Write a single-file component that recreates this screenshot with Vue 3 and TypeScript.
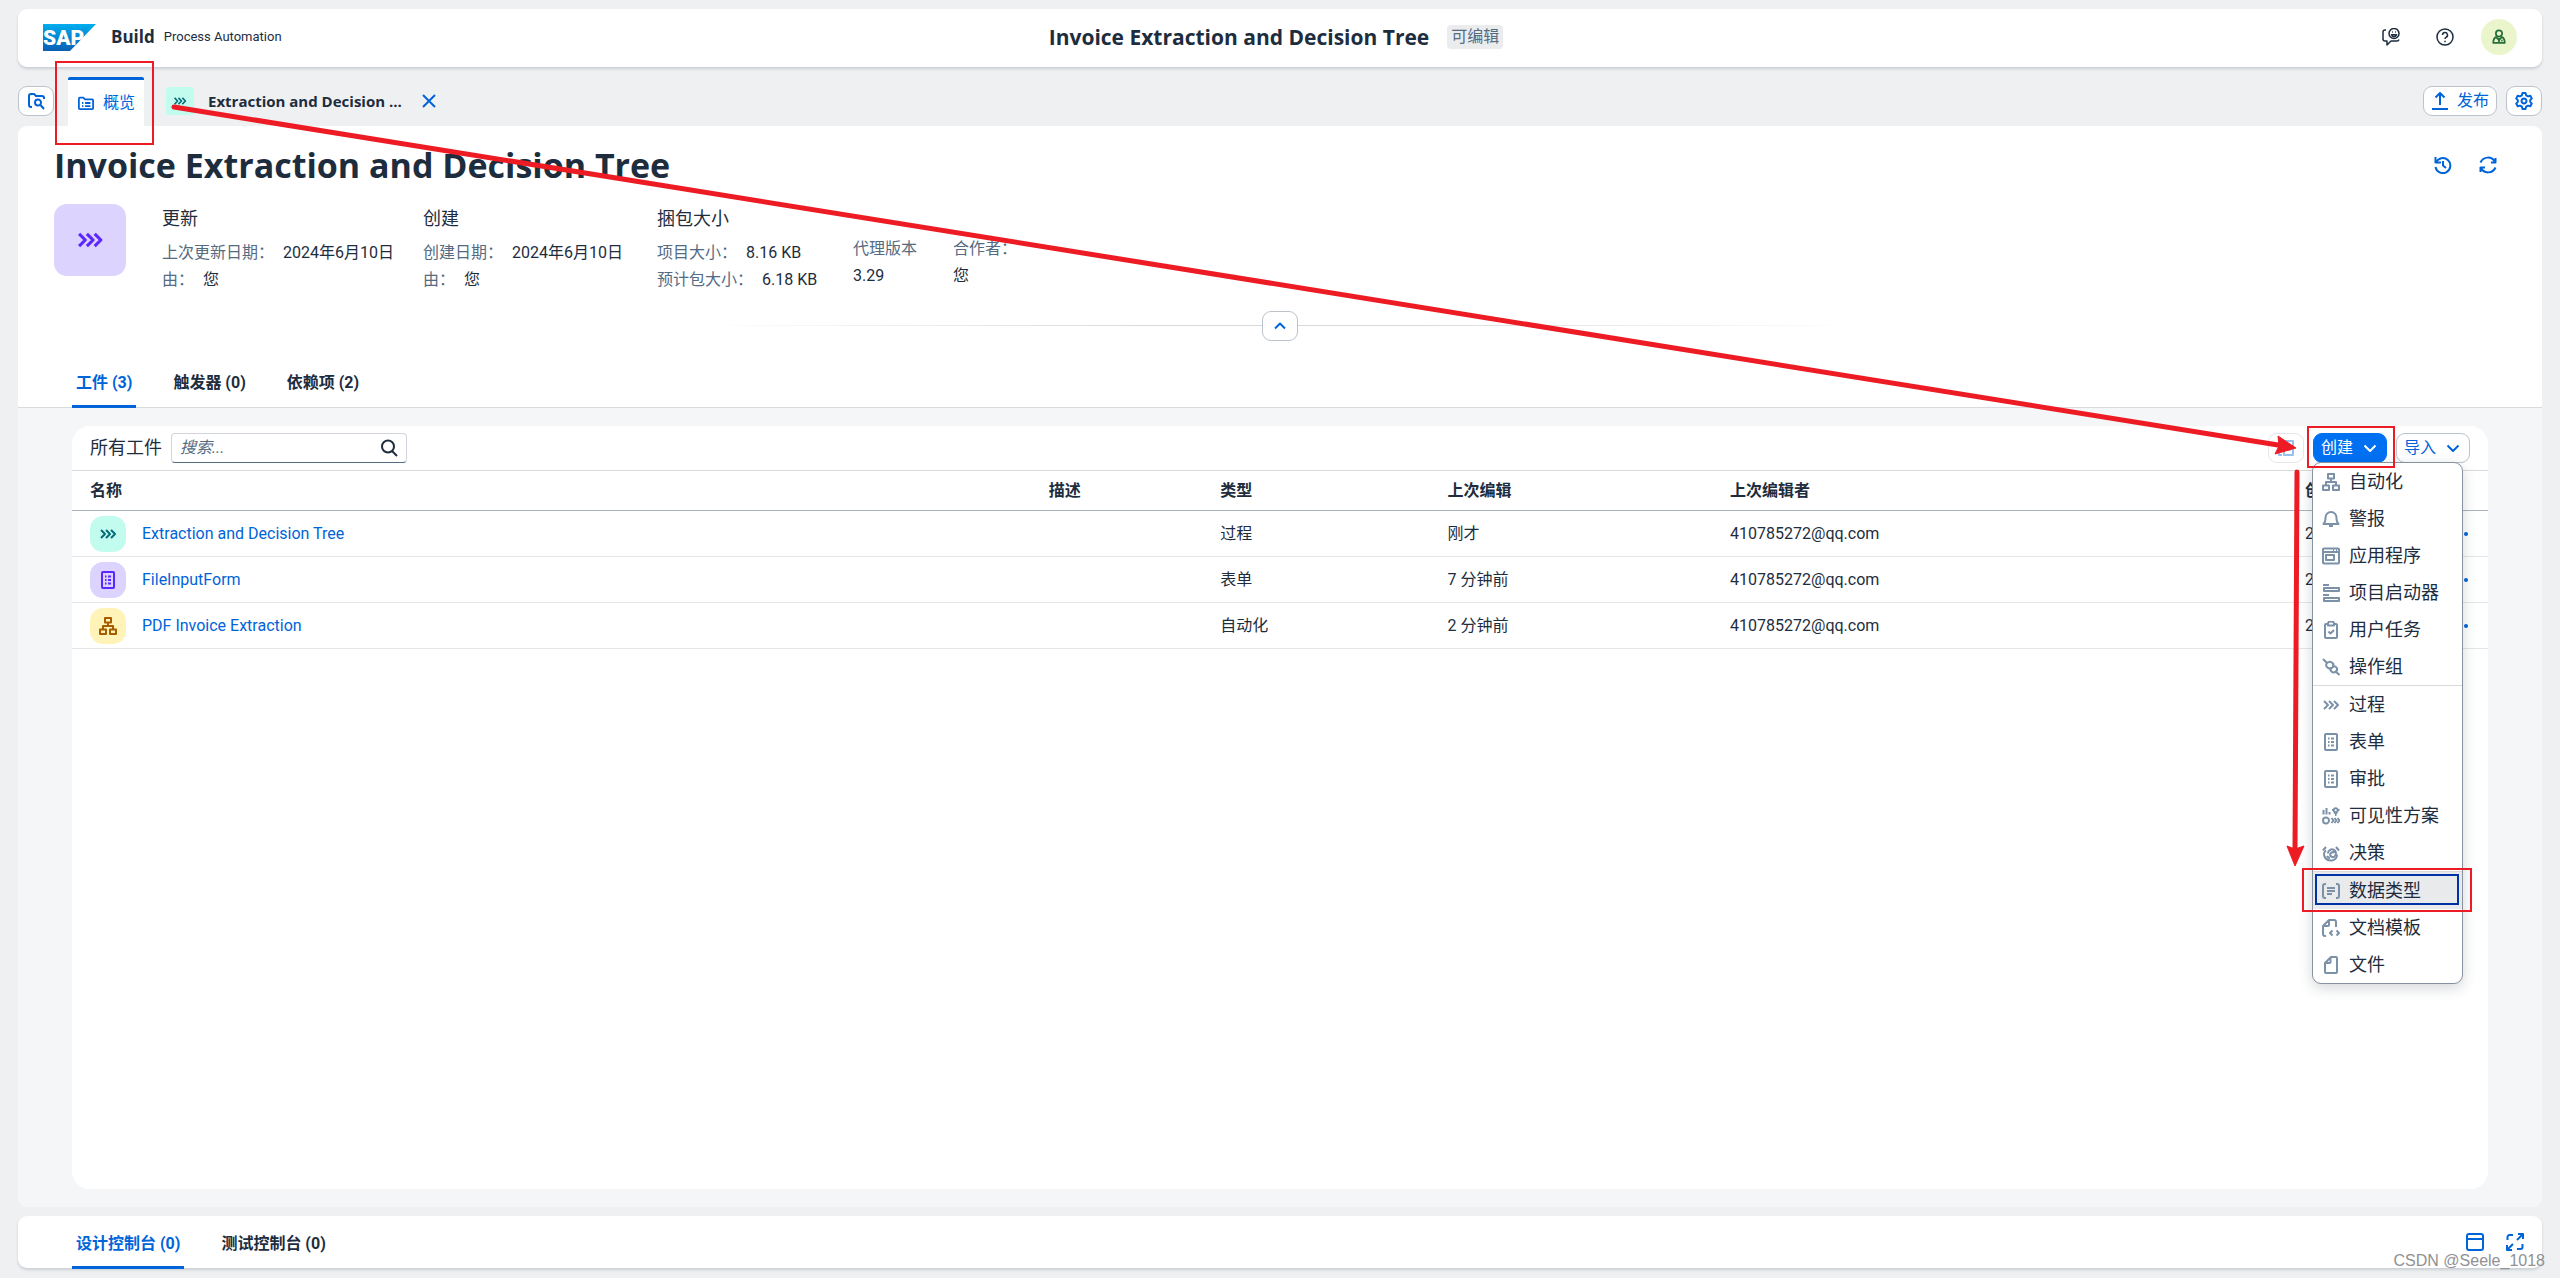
<script setup lang="ts">
import { h, ref, type FunctionalComponent } from 'vue'

const shapes: Record<string, string[]> = {
  folderSearch: ['M5 15H4a2 2 0 0 1-2-2V4a2 2 0 0 1 2-2h3l2 2h6a2 2 0 0 1 2 2v1', 'M14 10.500a3 3 0 1 1-6 0a3 3 0 1 1 6 0', 'M13.500 13l3.500 4'],
  overview: ['M1 15V4a1 1 0 0 1 1-1h4l2 2h8a1 1 0 0 1 1 1v9a1 1 0 0 1-1 1H2a1 1 0 0 1-1-1z', 'M4.500 9h1.500M8 9h6M4.500 12.500h1.500M8 12.500h6'],
  process: ['M2 5l4 4l-4 4', 'M7 5l4 4l-4 4', 'M12 5l4 4l-4 4'],
  close: ['M3 3l12 12M15 3L3 15'],
  chat: ['M4 2H3a2 2 0 0 0-2 2v7a2 2 0 0 0 2 2h2v4l4-4h6a2 2 0 0 0 2-1.500', 'M17 5.500a5 5 0 1 1-10 0a5 5 0 1 1 10 0', 'M9.500 6.800a2.600 2.600 0 0 0 5 0z', 'M10.200 4h.8M13 4h.8'],
  help: ['M17 9a8 8 0 1 1-16 0a8 8 0 1 1 16 0', 'M6.500 7a2.500 2.500 0 1 1 3.500 2.300q-1 .5-1 1.700', 'M9 12.700v1.500'],
  person: ['M12.500 5a3.500 3.500 0 1 1-7 0a3.500 3.500 0 1 1 7 0', 'M6.500 8.500Q2.500 10 2.500 15.500h13q0-5.500-4-7', 'M6 9.500l3 3l3-3', 'M9 10v5M11.500 13h1.500'],
  publish: ['M9 13V1M4.500 5.500L9 1l4.500 4.500', 'M1 17h16'],
  gear: ['M7.500 1h3l.6 2.300l2 1.100l2.200-.6l1.500 2.600l-1.600 1.700v1.800l1.600 1.700l-1.500 2.600l-2.200-.6l-2 1.100l-.6 2.300h-3l-.6-2.300l-2-1.100l-2.200.6l-1.500-2.600l1.600-1.700V8.100L1.200 6.400l1.500-2.600l2.200.6l2-1.100z', 'M11.500 9a2.500 2.500 0 1 1-5 0a2.500 2.500 0 1 1 5 0'],
  history: ['M1.500 1v5.500h5.500', 'M2 6.500A7.500 7.500 0 1 1 1.500 11', 'M9 5v4.500l3 2.500'],
  refresh: ['M1.500 6.500A8 8 0 0 1 16 6M16.500 2v4.500h-4.500', 'M16.500 11.500A8 8 0 0 1 2 12M1.500 16v-4.500h4.500'],
  up: ['M4 11.500l5-5l5 5'],
  down: ['M3.500 6.500l5.500 5.500l5.500-5.500'],
  search: ['M14 7.500a6 6 0 1 1-12 0a6 6 0 1 1 12 0', 'M12 12l5 5'],
  form: ['M4 1h10a1 1 0 0 1 1 1v14a1 1 0 0 1-1 1H4a1 1 0 0 1-1-1V2a1 1 0 0 1 1-1z', 'M6 5.500h1.500M9 5.500h3M6 9h1.500M9 9h3M6 12.500h1.500M9 12.500h3'],
  tree: ['M6 1h6v4.500H6z', 'M1 12.500h6V17H1z', 'M11 12.500h6V17h-6z', 'M9 5.500V9M4 12.500V9h10v3.500'],
  bell: ['M1.500 14q2-2 2-5V7.500a5.500 5.500 0 0 1 11 0V9q0 3 2 5z', 'M7 16h4'],
  app: ['M2 1.500h14a1 1 0 0 1 1 1v13a1 1 0 0 1-1 1H2a1 1 0 0 1-1-1v-13a1 1 0 0 1 1-1z', 'M1 5h16M11 3.200h1M14 3.200h1', 'M4 8h8v5H4z'],
  launcher: ['M1 1h6M2 4h15v3H2zM1 11h6M2 14h15v3H2z'],
  task: ['M5 3H4a1 1 0 0 0-1 1v12a1 1 0 0 0 1 1h10a1 1 0 0 0 1-1V4a1 1 0 0 0-1-1h-1', 'M6 2.500q0-2 3-2t3 2V4.500H6z', 'M6.500 10.500l2 2l3.500-3.500'],
  link: ['M1 1l4 4M13 13l4.500 4', 'M5 5q3-2.500 5.500 0q2 2 0 4.500q-3 2-5 0q-2.500-2-.5-4.500z', 'M10 8.500q3-1 4.500 1q1.500 2-.5 4q-2.500 2-4.500 0q-2-2-.500-4'],
  scenario: ['M1.500 7.500V3M4.500 7.500V1M7.500 7.500V5', 'M7 13.500a3 3 0 1 1-6 0a3 3 0 1 1 6 0', 'M9.500 11l2 2.500l-2 2.500M12.500 11l2 2.500l-2 2.500M15.500 11l2 2.500l-2 2.500', 'M12.800 6V5a2 2 0 1 1 1.800 0v1zM13 8h1.500M10 3h1M16.500 3h1'],
  decision: ['M1 6.500L4 3M17 6.500L14 3', 'M4 6.500q-3 2-1.500 6q2 4.500 7.500 4q5-1 5-6', 'M6 9.500a4 4 0 1 1 6.500 3q-2 1.500-4-.5q-1-2 1-3.500q2-1 3 .5', 'M5 12q1 2 3 2'],
  datatype: ['M4 2H3a2 2 0 0 0-2 2v10a2 2 0 0 0 2 2h1M14 2h1a2 2 0 0 1 2 2v10a2 2 0 0 1-2 2h-1', 'M5 6h8M5 9h8M5 12h5'],
  docTemplate: ['M4 17H3a2 2 0 0 1-2-2V7l6-6h5a2 2 0 0 1 2 2v5', 'M7 1v5a1 1 0 0 1-1 1H1', 'M10.500 11.500l-2.500 2.500l2.500 2.500M14.500 11.500L17 14l-2.500 2.500'],
  file: ['M3 7l6-6h5a1 1 0 0 1 1 1v14a1 1 0 0 1-1 1H4a1 1 0 0 1-1-1z', 'M8.500 1.500V6a1 1 0 0 1-1 1H3'],
  copy: ['M6 4H3a1 1 0 0 0-1 1v11h3', 'M7 2h9v14H7z', 'M10 6h3v5h-3z'],
  window: ['M3 1h12a2 2 0 0 1 2 2v12a2 2 0 0 1-2 2H3a2 2 0 0 1-2-2V3a2 2 0 0 1 2-2z', 'M1 6h16'],
  expand: ['M1.500 7V4a2 2 0 0 1 2-2H7M16.500 11v3a2 2 0 0 1-2 2H11', 'M11 7l6-6M12 1h5v5', 'M7 11l-6 6M1 12v5h5'],
}

const Glyph: FunctionalComponent<{ name: string }> = (props) =>
  h(
    'svg',
    { class: 'glyph', viewBox: '0 0 18 18', 'aria-hidden': 'true' },
    shapes[props.name].map((d) => h('path', { d })),
  )
Glyph.props = ['name']

const facts = [
  { title: '更新', rows: [['上次更新日期：', '2024年6月10日'], ['由：', '您']] },
  { title: '创建', rows: [['创建日期：', '2024年6月10日'], ['由：', '您']] },
  { title: '捆包大小', rows: [['项目大小：', '8.16 KB'], ['预计包大小：', '6.18 KB']] },
]

const sections = ['工件 (3)', '触发器 (0)', '依赖项 (2)']
const consoles = ['设计控制台 (0)', '测试控制台 (0)']
const headings = ['名称', '描述', '类型', '上次编辑', '上次编辑者', '创建日期', '']

const artifacts = [
  { icon: 'process', tone: 'teal', name: 'Extraction and Decision Tree', type: '过程', edited: '刚才' },
  { icon: 'form', tone: 'violet', name: 'FileInputForm', type: '表单', edited: '7 分钟前' },
  { icon: 'tree', tone: 'amber', name: 'PDF Invoice Extraction', type: '自动化', edited: '2 分钟前' },
]

const menuGroups = [
  [
    { icon: 'tree', label: '自动化' },
    { icon: 'bell', label: '警报' },
    { icon: 'app', label: '应用程序' },
    { icon: 'launcher', label: '项目启动器' },
    { icon: 'task', label: '用户任务' },
    { icon: 'link', label: '操作组' },
  ],
  [
    { icon: 'process', label: '过程' },
    { icon: 'form', label: '表单' },
    { icon: 'form', label: '审批' },
    { icon: 'scenario', label: '可见性方案' },
    { icon: 'decision', label: '决策' },
  ],
  [
    { icon: 'datatype', label: '数据类型' },
    { icon: 'docTemplate', label: '文档模板' },
    { icon: 'file', label: '文件' },
  ],
]
const current = ref('数据类型')
const query = ref('')
</script>

<template>
  <div class="app">
    <header class="shell">
      <div class="brand">
        <svg class="logo" viewBox="0 0 53 27" role="img" aria-label="SAP">
          <defs>
            <linearGradient id="logo-fill" x1="0" y1="0" x2="0" y2="1">
              <stop offset="0" stop-color="#00aeef" />
              <stop offset="1" stop-color="#0a5fb4" />
            </linearGradient>
          </defs>
          <polygon points="0,0 53,0 27,27 0,27" fill="url(#logo-fill)" />
          <text x="0" y="21">SAP</text>
        </svg>
        <strong>Build</strong>
        <span>Process Automation</span>
      </div>
      <div class="project">
        <span class="project-name">Invoice Extraction and Decision Tree</span>
        <span class="badge">可编辑</span>
      </div>
      <div class="shell-actions">
        <button class="plain dark" aria-label="反馈"><Glyph name="chat" /></button>
        <button class="plain dark" aria-label="帮助"><Glyph name="help" /></button>
        <button class="avatar" aria-label="用户"><Glyph name="person" /></button>
      </div>
    </header>

    <nav class="tabs">
      <button class="btn square" aria-label="浏览"><Glyph name="folderSearch" /></button>
      <a class="tab open" href="#overview">
        <Glyph name="overview" /><span>概览</span>
        <i class="mark mark-tab"></i>
      </a>
      <a class="tab" href="#process">
        <span class="chip"><Glyph name="process" /></span>
        <b>Extraction and Decision ...</b>
      </a>
      <button class="plain close" aria-label="关闭"><Glyph name="close" /></button>
      <div class="tabs-end">
        <button class="btn wide"><Glyph name="publish" />发布</button>
        <button class="btn square" aria-label="设置"><Glyph name="gear" /></button>
      </div>
    </nav>

    <main>
      <section class="summary">
        <div class="title-row">
          <h1>Invoice Extraction and Decision Tree</h1>
          <div class="title-actions">
            <button class="plain" aria-label="历史"><Glyph name="history" /></button>
            <button class="plain" aria-label="刷新"><Glyph name="refresh" /></button>
          </div>
        </div>
        <div class="facts">
          <div class="project-icon"><Glyph name="process" /></div>
          <dl v-for="f in facts" :key="f.title" class="fact">
            <h2>{{ f.title }}</h2>
            <div v-for="r in f.rows" :key="r[0]"><dt>{{ r[0] }}</dt><dd>{{ r[1] }}</dd></div>
          </dl>
          <dl class="stacked"><dt>代理版本</dt><dd>3.29</dd></dl>
          <dl class="stacked"><dt>合作者：</dt><dd>您</dd></dl>
        </div>
        <div class="fold">
          <button class="btn square" aria-label="折叠标题"><Glyph name="up" /></button>
        </div>
        <nav class="sections">
          <a v-for="(s, i) in sections" :key="s" href="#" :class="{ active: i === 0 }">{{ s }}</a>
        </nav>
      </section>

      <section class="body">
        <div class="card">
          <div class="toolbar">
            <label for="artifact-search">所有工件</label>
            <div class="search">
              <input id="artifact-search" v-model="query" type="text" placeholder="搜索..." />
              <Glyph name="search" />
            </div>
            <div class="toolbar-end">
              <button class="btn square" disabled aria-label="复制"><Glyph name="copy" /></button>
              <div class="create">
                <button class="btn wide primary" aria-haspopup="menu">创建<Glyph name="down" /></button>
                <i class="mark mark-create"></i>
                <div class="menu" role="menu">
                  <div v-for="(g, i) in menuGroups" :key="i" class="group">
                    <button
                      v-for="m in g"
                      :key="m.label"
                      role="menuitem"
                      :class="{ current: m.label === current }"
                      @click="current = m.label"
                    >
                      <Glyph :name="m.icon" />{{ m.label }}
                      <i v-if="m.label === current" class="mark mark-item"></i>
                    </button>
                  </div>
                </div>
              </div>
              <button class="btn wide">导入<Glyph name="down" /></button>
            </div>
          </div>
          <table>
            <colgroup>
              <col class="c-name" /><col class="c-desc" /><col class="c-type" /><col class="c-edit" />
              <col class="c-by" /><col class="c-date" /><col />
            </colgroup>
            <thead>
              <tr><th v-for="(t, i) in headings" :key="i" scope="col">{{ t }}</th></tr>
            </thead>
            <tbody>
              <tr v-for="a in artifacts" :key="a.name">
                <td>
                  <div class="name">
                    <span class="tile" :class="a.tone"><Glyph :name="a.icon" /></span>
                    <a href="#">{{ a.name }}</a>
                  </div>
                </td>
                <td></td>
                <td>{{ a.type }}</td>
                <td>{{ a.edited }}</td>
                <td>410785272@qq.com</td>
                <td>2024年6月10日</td>
                <td class="more-cell">
                  <button class="more" aria-label="更多"><i></i><i></i><i></i></button>
                </td>
              </tr>
            </tbody>
          </table>
        </div>
      </section>
    </main>

    <footer class="console">
      <nav class="sections">
        <a v-for="(c, i) in consoles" :key="c" href="#" :class="{ active: i === 0 }">{{ c }}</a>
      </nav>
      <div class="console-actions">
        <button class="plain" aria-label="窗口"><Glyph name="window" /></button>
        <button class="plain" aria-label="全屏"><Glyph name="expand" /></button>
      </div>
    </footer>

    <svg class="arrows" viewBox="0 0 2560 1278" preserveAspectRatio="none" aria-hidden="true">
      <path class="shaft" d="M174 107L2278 445" />
      <path class="head" d="M2278 436L2296 448L2275 454L2279 446z" />
      <path class="shaft" d="M2297 472L2295 850" />
      <path class="head" d="M2287 846L2295 849L2304 846L2295 866z" />
    </svg>
    <div class="watermark">CSDN @Seele_1018</div>
  </div>
</template>

<style>
body {
  margin: 0;
}
</style>

<style scoped>
.app {
  --text: #1d2d3e;
  --label: #556b82;
  --blue: #0064d9;
  --red: #ed1c24;
  --strong: 'Open Sans', 'Noto Sans CJK SC', sans-serif;
  position: relative;
  display: flex;
  flex-direction: column;
  box-sizing: border-box;
  min-height: 100vh;
  padding: 9px 18px 10px;
  background: #eff0f2;
  color: var(--text);
  font: 16px/24px Roboto, 'Noto Sans CJK SC', sans-serif;
}
.app *,
.app *::before {
  box-sizing: border-box;
}
button {
  padding: 0;
  border: 0;
  background: none;
  color: inherit;
  font: inherit;
  cursor: pointer;
}
a {
  color: inherit;
  text-decoration: none;
}
dl,
dd,
h1,
h2 {
  margin: 0;
}
.glyph {
  flex: none;
  width: 18px;
  height: 18px;
  fill: none;
  stroke: currentColor;
  stroke-width: 2;
  stroke-linejoin: round;
}
.shell {
  display: grid;
  grid-template-columns: 1fr auto 1fr;
  align-items: center;
  height: 58px;
  padding: 0 25px 2px;
  border-radius: 9px;
  background: #fff;
  box-shadow: 0 2px 3px #c9cfd5;
}
.brand {
  display: flex;
  align-items: center;
}
.logo {
  width: 53px;
  height: 27px;
  margin-right: 15px;
}
.logo text {
  fill: #fff;
  font: 900 21px Roboto, sans-serif;
}
.brand strong {
  margin-right: 9px;
  font: 700 17px/24px var(--strong);
}
.brand span {
  font-size: 13px;
}
.project {
  display: flex;
  align-items: center;
  gap: 18px;
  margin-right: 8px;
}
.project-name {
  font: 700 21px/30px var(--strong);
}
.badge {
  padding: 0 4px;
  border-radius: 4px;
  background: #ebecee;
  color: var(--label);
}
.shell-actions {
  display: flex;
  align-items: center;
  justify-content: flex-end;
  gap: 36px;
}
.plain {
  display: flex;
  color: var(--blue);
}
.dark {
  color: var(--text);
}
.dark .glyph {
  stroke-width: 1.5;
}
.avatar {
  display: flex;
  align-items: center;
  justify-content: center;
  width: 36px;
  height: 36px;
  margin-left: -9px;
  border-radius: 50%;
  background: #ebf5cb;
  color: #256f3a;
}
.avatar .glyph {
  width: 16px;
  height: 16px;
}
.tabs {
  display: flex;
  align-items: flex-end;
  height: 59px;
}
.btn {
  display: inline-flex;
  align-items: center;
  justify-content: center;
  height: 30px;
  border: 1px solid #bcc3ca;
  border-radius: 9px;
  background: #fff;
  color: var(--blue);
}
.square {
  width: 36px;
}
.wide {
  gap: 8px;
  width: 74px;
}
.tabs > .btn,
.tabs-end {
  margin-bottom: 10px;
}
.tabs-end {
  display: flex;
  gap: 9px;
  margin-left: auto;
}
.tab {
  display: flex;
  align-items: center;
  height: 49px;
  padding-bottom: 2px;
}
.tab b {
  font: 700 15px/24px var(--strong);
}
.tab.open {
  position: relative;
  gap: 9px;
  margin: 0 22px 0 14px;
  padding: 0 9px 0 10px;
  border-top: 3px solid var(--blue);
  border-radius: 2px 2px 0 0;
  background: #fff;
  color: var(--blue);
}
.tab.open .glyph {
  width: 16px;
  height: 16px;
}
.chip {
  display: flex;
  align-items: center;
  justify-content: center;
  width: 28px;
  height: 28px;
  margin-right: 14px;
  border-radius: 3px;
  background: #c2fcee;
  color: #046c7a;
}
.chip .glyph {
  width: 14px;
  height: 14px;
}
.close {
  margin: 0 0 16px 18px;
}
.mark {
  position: absolute;
  z-index: 3;
  border: 2px solid var(--red);
  pointer-events: none;
}
.mark-tab {
  inset: -19px -10px -19px -13px;
}
.mark-create {
  inset: -7px -8px -5px -6px;
}
.mark-item {
  inset: -4px -10px -3px -11px;
}
main {
  display: flex;
  flex: 1;
  flex-direction: column;
}
.summary {
  border-bottom: 1px solid #d9dcdf;
  border-radius: 9px 9px 0 0;
  background: #fff;
}
.title-row {
  display: flex;
  align-items: center;
  justify-content: space-between;
  height: 78px;
  padding: 0 45px 0 36px;
}
h1 {
  font: 700 34px/44px var(--strong);
}
.title-actions {
  display: flex;
  gap: 27px;
}
.facts {
  display: grid;
  grid-template-columns: 108px 261px 234px 196px 100px auto;
  height: 107px;
  padding-left: 36px;
}
.project-icon {
  display: flex;
  align-items: center;
  justify-content: center;
  width: 72px;
  height: 72px;
  border-radius: 13px;
  background: #dcd3ff;
  color: #5b27ff;
}
.project-icon .glyph {
  width: 28px;
  height: 28px;
}
.fact h2 {
  margin-bottom: 5px;
  font-size: 18px;
  font-weight: 400;
  line-height: 30px;
}
.fact div {
  display: flex;
  gap: 9px;
  line-height: 27px;
}
dt {
  color: var(--label);
}
.stacked {
  padding-top: 31px;
  line-height: 27px;
}
.fold {
  display: flex;
  justify-content: center;
  height: 30px;
  background: linear-gradient(90deg, transparent 27%, #d9d9d9 45%, #d9d9d9 55%, transparent 73%) 0 14px / 100% 1px no-repeat;
}
.sections {
  display: flex;
  gap: 33px;
  padding-left: 54px;
  font-weight: 700;
}
.sections a {
  padding: 0 4px;
  border-bottom: 3px solid transparent;
}
.sections .active {
  border-color: var(--blue);
  color: var(--blue);
}
.summary .sections {
  height: 67px;
  margin-bottom: -1px;
  line-height: 83px;
}
.body {
  display: flex;
  flex: 1;
  padding: 18px 54px;
  border-radius: 0 0 9px 9px;
  background: #f5f6f8;
}
.card {
  flex: 1;
  border-radius: 18px;
  background: #fff;
}
.toolbar {
  display: flex;
  align-items: center;
  height: 45px;
  padding: 0 18px;
  border-bottom: 1px solid #d9d9d9;
  font-size: 18px;
}
.search {
  display: flex;
  align-items: center;
  width: 236px;
  height: 30px;
  margin-left: 9px;
  padding: 0 8px;
  border: 1px solid #cfd5da;
  border-bottom-color: var(--label);
  border-radius: 4px;
}
.search input {
  flex: 1;
  min-width: 0;
  padding: 0;
  border: 0;
  outline: 0;
  background: none;
  color: inherit;
  font: inherit;
  font-size: 16px;
}
.search input::placeholder {
  color: var(--label);
  font-style: italic;
}
.toolbar-end {
  display: flex;
  gap: 9px;
  margin-left: auto;
  font-size: 16px;
}
.btn:disabled {
  opacity: 0.4;
}
.create {
  position: relative;
  display: flex;
}
.primary {
  border-color: #0070f2;
  background: #0070f2;
  color: #fff;
}
.menu {
  position: absolute;
  top: 29px;
  left: -1px;
  z-index: 2;
  width: 151px;
  border: 1px solid #8793a0;
  border-radius: 9px;
  background: #fff;
  box-shadow: 0 4px 14px #22354833;
  font-size: 18px;
}
.group + .group {
  border-top: 1px solid #d9d9d9;
}
.menu button {
  position: relative;
  display: flex;
  align-items: center;
  gap: 9px;
  width: 100%;
  height: 37px;
  padding-left: 9px;
  white-space: nowrap;
}
.menu .glyph {
  color: #7b91a8;
}
.menu .current {
  background: #e9eaec;
}
.menu .current::before {
  position: absolute;
  inset: 2px 3px 4px 2px;
  border: 2px solid #0032a5;
  content: '';
}
table {
  width: 100%;
  border-collapse: separate;
  border-spacing: 0;
  table-layout: fixed;
}
.c-name {
  width: 40.1%;
}
.c-desc {
  width: 7.1%;
}
.c-type {
  width: 9.4%;
}
.c-edit {
  width: 11.7%;
}
.c-by {
  width: 23.8%;
}
.c-date {
  width: 5.9%;
}
th {
  height: 40px;
  padding: 0 8px;
  border-bottom: 1px solid #a8b3bd;
  text-align: left;
  white-space: nowrap;
}
td {
  height: 46px;
  padding: 0 8px;
  border-bottom: 1px solid #e5e5e5;
  white-space: nowrap;
}
th:first-child,
td:first-child {
  padding-left: 18px;
}
.name {
  display: flex;
  align-items: center;
  gap: 16px;
}
.name a {
  color: var(--blue);
}
.tile {
  display: flex;
  align-items: center;
  justify-content: center;
  width: 36px;
  height: 36px;
  border-radius: 13px;
}
.teal {
  background: #c2fcee;
  color: #046c7a;
}
.violet {
  background: #dcd3ff;
  color: #5b27ff;
}
.amber {
  background: #fff3b8;
  color: #a45d00;
}
.more-cell {
  padding-right: 20px;
}
.more {
  display: flex;
  gap: 3px;
  margin-left: auto;
}
.more i {
  width: 4px;
  height: 4px;
  border-radius: 50%;
  background: var(--blue);
}
.console {
  display: flex;
  align-items: center;
  justify-content: space-between;
  height: 52px;
  margin-top: 9px;
  padding-right: 18px;
  border-radius: 9px;
  background: #fff;
  box-shadow: 0 2px 3px #c9cfd5;
}
.console .sections {
  height: 53px;
  margin-bottom: -1px;
  line-height: 56px;
}
.console-actions {
  display: flex;
  gap: 22px;
}
.arrows {
  position: absolute;
  inset: 0;
  z-index: 4;
  width: 100%;
  height: 100%;
  pointer-events: none;
}
.shaft {
  fill: none;
  stroke: var(--red);
  stroke-linecap: round;
  stroke-width: 5;
}
.head {
  fill: var(--red);
  stroke: var(--red);
}
.watermark {
  position: absolute;
  right: 15px;
  bottom: 5px;
  z-index: 5;
  color: #8f9194;
  font: 16px/24px 'Liberation Sans', sans-serif;
}
</style>
